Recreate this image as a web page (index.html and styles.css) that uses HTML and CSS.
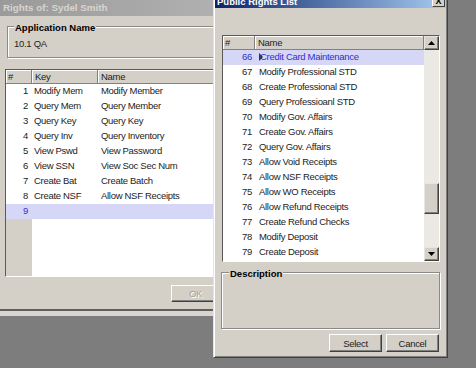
FILE: index.html
```html
<!DOCTYPE html>
<html>
<head>
<meta charset="utf-8">
<title>Rights</title>
<link rel="stylesheet" href="styles.css">
</head>
<body>
<div class="win win-back">
  <div class="win-back-inner">
    <div class="title-inactive">Rights of: Sydel Smith</div>
    <div class="group group-app">
      <div class="group-label">Application Name</div>
      <div class="group-value">10.1 QA</div>
    </div>
    <div class="list list-left">
      <div class="lhead">
        <div class="hcell hnum">#</div>
        <div class="hcell">Key</div>
        <div class="hcell">Name</div>
      </div>
      <div class="lbody">
        <div class="lrow"><span class="num">1</span><span class="txt">Modify Mem</span><span class="txt">Modify Member</span></div>
        <div class="lrow"><span class="num">2</span><span class="txt">Query Mem</span><span class="txt">Query Member</span></div>
        <div class="lrow"><span class="num">3</span><span class="txt">Query Key</span><span class="txt">Query Key</span></div>
        <div class="lrow"><span class="num">4</span><span class="txt">Query Inv</span><span class="txt">Query Inventory</span></div>
        <div class="lrow"><span class="num">5</span><span class="txt">View Pswd</span><span class="txt">View Password</span></div>
        <div class="lrow"><span class="num">6</span><span class="txt">View SSN</span><span class="txt">View Soc Sec Num</span></div>
        <div class="lrow"><span class="num">7</span><span class="txt">Create Bat</span><span class="txt">Create Batch</span></div>
        <div class="lrow"><span class="num">8</span><span class="txt">Create NSF</span><span class="txt">Allow NSF Receipts</span></div>
        <div class="lrow sel"><span class="num">9</span><span class="txt"></span><span class="txt"></span></div>
      </div>
    </div>
    <div class="ok-row"><button class="btn btn-disabled">OK</button></div>
  </div>
</div>

<div class="win win-front">
  <div class="title-active">
    <span class="title-text">Public Rights List</span>
    <span class="close-btn">X</span>
  </div>
  <div class="front-body">
    <div class="list list-right">
      <div class="rmain">
        <div class="rhead">
          <div class="hcell hnum">#</div>
          <div class="hcell">Name</div>
        </div>
        <div class="rrow sel"><span class="num">66</span><span class="txt"><i class="caret"></i>Credit Card Maintenance</span></div>
        <div class="rrow"><span class="num">67</span><span class="txt">Modify Professional STD</span></div>
        <div class="rrow"><span class="num">68</span><span class="txt">Create Professional STD</span></div>
        <div class="rrow"><span class="num">69</span><span class="txt">Query Professioanl STD</span></div>
        <div class="rrow"><span class="num">70</span><span class="txt">Modify Gov. Affairs</span></div>
        <div class="rrow"><span class="num">71</span><span class="txt">Create Gov. Affairs</span></div>
        <div class="rrow"><span class="num">72</span><span class="txt">Query Gov. Affairs</span></div>
        <div class="rrow"><span class="num">73</span><span class="txt">Allow Void Receipts</span></div>
        <div class="rrow"><span class="num">74</span><span class="txt">Allow NSF Receipts</span></div>
        <div class="rrow"><span class="num">75</span><span class="txt">Allow WO Receipts</span></div>
        <div class="rrow"><span class="num">76</span><span class="txt">Allow Refund Receipts</span></div>
        <div class="rrow"><span class="num">77</span><span class="txt">Create Refund Checks</span></div>
        <div class="rrow"><span class="num">78</span><span class="txt">Modify Deposit</span></div>
        <div class="rrow"><span class="num">79</span><span class="txt">Create Deposit</span></div>
      </div>
      <div class="vscroll">
        <div class="sbtn"><svg width="7" height="4" viewBox="0 0 7 4"><path d="M3.5 0 L7 4 L0 4 Z" fill="#000"/></svg></div>
        <div class="track"><div class="thumb"></div></div>
        <div class="sbtn"><svg width="7" height="4" viewBox="0 0 7 4"><path d="M0 0 L7 0 L3.5 4 Z" fill="#000"/></svg></div>
      </div>
    </div>
    <div class="group group-desc">
      <div class="group-label">Description</div>
    </div>
    <div class="btn-row">
      <button class="btn">Select</button>
      <button class="btn">Cancel</button>
    </div>
  </div>
</div>
</body>
</html>
```

FILE: styles.css
```css
* { box-sizing: border-box; }
html, body { margin: 0; padding: 0; }
body {
  width: 476px;
  height: 368px;
  position: relative;
  overflow: hidden;
  background: #7d7d7d;
  font-family: "Liberation Sans", Arial, sans-serif;
  font-size: 9.5px;
  letter-spacing: -0.3px;
  color: #1c1c1c;
}

.win { position: absolute; background: #d4d0c8; }

/* back window */
.win-back {
  left: 0;
  top: 0;
  width: 250px;
  padding-bottom: 5px;
  background: #d8d5ce;
}
.win-back-inner {
  height: 311px;
  display: flex;
  flex-direction: column;
  background: #d4d0c8;
  border-bottom: 2px solid #5e5e5e;
}
.title-inactive {
  height: 16px;
  flex: none;
  background: linear-gradient(90deg, #9a9a9a, #b4b4b4);
  color: #d8d5cf;
  font-weight: bold;
  font-size: 9.8px;
  letter-spacing: 0;
  line-height: 16px;
  padding-left: 3px;
}

.group {
  border: 1px solid #8a8a8a;
  box-shadow: inset 1px 1px 0 #fff, 1px 1px 0 #fff;
  flex: none;
}
.group-label {
  width: max-content;
  background: #d4d0c8;
  font-weight: bold;
  font-size: 9.5px;
  letter-spacing: 0;
  line-height: 11px;
  color: #000;
  padding: 0 1px;
}
.group-app {
  margin: 10px 0 0 7px;
  height: 32px;
  padding-left: 6px;
}
.group-app .group-label { margin-top: -5px; }
.group-value { margin-top: 5px; line-height: 11px; color: #222; }

.list {
  border: 1px solid;
  border-color: #5a5a5a #fff #fff #5a5a5a;
  background: #fff;
  flex: none;
}
.list-left {
  margin: 11px 0 0 5px;
  height: 208px;
  display: flex;
  flex-direction: column;
}
.lhead, .rhead {
  display: grid;
  height: 14px;
  background: #d4d0c8;
  border-bottom: 1px solid #808080;
}
.lhead { grid-template-columns: 26px 66px 1fr; }
.hcell {
  line-height: 13px;
  padding-left: 3px;
  border-right: 1px solid #808080;
  box-shadow: inset 1px 1px 0 #fff;
  color: #222;
}
.hcell.hnum { padding-left: 2px; }

.lbody {
  flex: 1;
  background: linear-gradient(90deg, #d4d0c8 0 26px, #fff 26px);
}
.lrow {
  display: grid;
  grid-template-columns: 26px 66px 1fr;
  height: 15px;
  line-height: 14px;
  background: #fff;
}
.num { text-align: right; padding-right: 4px; }
.txt { padding-left: 2px; white-space: nowrap; }
.lrow .txt:last-child { padding-left: 3px; }
.sel { background: #d6d6f7; color: #3030c8; }

.ok-row {
  display: flex;
  justify-content: flex-end;
  padding-right: 30px;
  margin-top: 8px;
}
.btn {
  font-family: "Liberation Sans", Arial, sans-serif;
  font-size: 9.5px;
  letter-spacing: -0.3px;
  color: #1c1c1c;
  background: #d4d0c8;
  border: 1px solid;
  border-color: #fff #404040 #404040 #fff;
  box-shadow: inset -1px -1px 0 #808080;
  padding: 0;
  margin: 0;
  height: 18px;
  width: 53px;
  line-height: 15px;
}
.btn-disabled {
  width: 49px;
  height: 17px;
  color: #a3a09a;
  text-shadow: 1px 1px 0 #fff;
}

/* front window */
.win-front {
  left: 213px;
  top: -10px;
  width: 235px;
  height: 368px;
  border: 1px solid;
  border-color: #e6e4df #404040 #404040 #e6e4df;
  box-shadow: inset 1px 1px 0 #fff, inset -1px -1px 0 #808080;
  padding: 1px;
}
.title-active {
  height: 16px;
  display: flex;
  justify-content: space-between;
  align-items: flex-start;
  background: linear-gradient(90deg, #0a246a, #a6caf0);
  padding: 0 1px 0 2px;
}
.title-text {
  color: #fff;
  font-weight: bold;
  font-size: 9.5px;
  letter-spacing: 0;
  line-height: 11px;
  margin-top: 4px;
}
.close-btn {
  width: 13px;
  height: 12px;
  margin-top: 3px;
  background: #d4d0c8;
  border: 1px solid;
  border-color: #fff #404040 #404040 #fff;
  font-size: 9px;
  font-weight: bold;
  letter-spacing: 0;
  line-height: 10px;
  text-align: center;
  color: #000;
}
.front-body {
  padding: 27px 6px 0 7px;
}
.list-right {
  height: 227px;
  display: flex;
}
.rmain { flex: 1; display: flex; flex-direction: column; }
.rhead { grid-template-columns: 32px 1fr; }
.rrow {
  display: grid;
  grid-template-columns: 32px 1fr;
  height: 15px;
  line-height: 14px;
}
.rrow .num { padding-right: 3px; }
.rrow .txt { padding-left: 4px; }
.caret {
  display: inline-block;
  width: 0;
  height: 0;
  border-left: 4px solid #2e3a12;
  border-top: 4px solid transparent;
  border-bottom: 4px solid transparent;
  margin-right: -3px;
  vertical-align: -1px;
}
.vscroll {
  width: 15px;
  display: flex;
  flex-direction: column;
  background: #ebe9e4;
}
.sbtn {
  height: 14px;
  flex: none;
  background: #d4d0c8;
  border: 1px solid;
  border-color: #e8e6e2 #404040 #404040 #e8e6e2;
  box-shadow: inset -1px -1px 0 #808080;
  display: flex;
  align-items: center;
  justify-content: center;
}
.track { flex: 1; }
.thumb {
  margin-top: 133px;
  height: 31px;
  background: #d4d0c8;
  border: 1px solid;
  border-color: #e8e6e2 #404040 #404040 #e8e6e2;
  box-shadow: inset -1px -1px 0 #808080;
}
.group-desc {
  margin-top: 10px;
  margin-left: -1px;
  height: 57px;
  padding-left: 7px;
}
.group-desc .group-label { margin-top: -5px; }
.btn-row {
  display: flex;
  justify-content: flex-end;
  gap: 4px;
  margin-top: 5px;
  padding-right: 1px;
}
```
